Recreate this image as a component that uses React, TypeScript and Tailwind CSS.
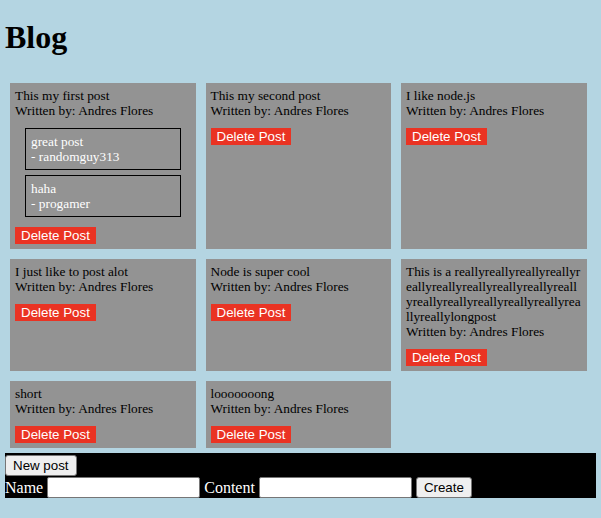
import React from "react";

type Comment = { text: string; author: string };
type Post = { content: string; author: string; comments: Comment[] };

const posts: Post[] = [
    {
        content: "This my first post",
        author: "Andres Flores",
        comments: [
            { text: "great post", author: "randomguy313" },
            { text: "haha", author: "progamer" },
        ],
    },
    { content: "This my second post", author: "Andres Flores", comments: [] },
    { content: "I like node.js", author: "Andres Flores", comments: [] },
    { content: "I just like to post alot", author: "Andres Flores", comments: [] },
    { content: "Node is super cool", author: "Andres Flores", comments: [] },
    {
        content: "This is a " + "really".repeat(17) + "longpost",
        author: "Andres Flores",
        comments: [],
    },
    { content: "short", author: "Andres Flores", comments: [] },
    { content: "looooooong", author: "Andres Flores", comments: [] },
];

function PostCard({ post }: { post: Post }) {
    return (
        <div className="w-[185.5px] m-[5px] p-[5px] bg-[#939393] text-black text-[13.33px] leading-[15px] break-all">
            <div>{post.content}</div>
            <div>Written by: {post.author}</div>
            {post.comments.length > 0 && (
                <div className="mt-[10px] mx-[10px] flex flex-col gap-[5px]">
                    {post.comments.map((c, i) => (
                        <div key={i} className="border border-black p-[5px] text-white">
                            <div>{c.text}</div>
                            <div>- {c.author}</div>
                        </div>
                    ))}
                </div>
            )}
            <button className="mt-[10px] block bg-[#ea3323] text-white px-[6px] py-[1px] text-[13.33px] leading-[15px] font-['Liberation_Sans',Arial,sans-serif]">
                Delete Post
            </button>
        </div>
    );
}

export default function App() {
    return (
        <div className="min-h-screen bg-[#b4d5e2] px-[5px] pt-[20px] font-['Liberation_Serif','Times_New_Roman',serif]">
            <h1 className="text-[32px] font-bold leading-[35px] mb-[23px]">Blog</h1>
            <div className="flex flex-wrap">
                {posts.map((p, i) => (
                    <PostCard key={i} post={p} />
                ))}
            </div>
            <div className="bg-black flex flex-col">
                <div>
                    <button className="h-[21px] bg-[#efefef] border border-[#767676] rounded-[3px] px-[7px] text-[13.33px] text-black font-['Liberation_Sans',Arial,sans-serif]">
                        New post
                    </button>
                </div>
                <div className="flex items-center gap-[4px] text-white text-[16px] leading-[18px]">
                    <span>Name</span>
                    <input className="w-[153px] h-[21px] bg-white border border-[#767676] rounded-[2px] px-[2px] text-[13.33px] text-black" />
                    <span>Content</span>
                    <input className="w-[153px] h-[21px] bg-white border border-[#767676] rounded-[2px] px-[2px] text-[13.33px] text-black" />
                    <button className="h-[21px] bg-[#efefef] border border-[#767676] rounded-[3px] px-[7px] text-[13.33px] text-black font-['Liberation_Sans',Arial,sans-serif]">
                        Create
                    </button>
                </div>
            </div>
        </div>
    );
}
